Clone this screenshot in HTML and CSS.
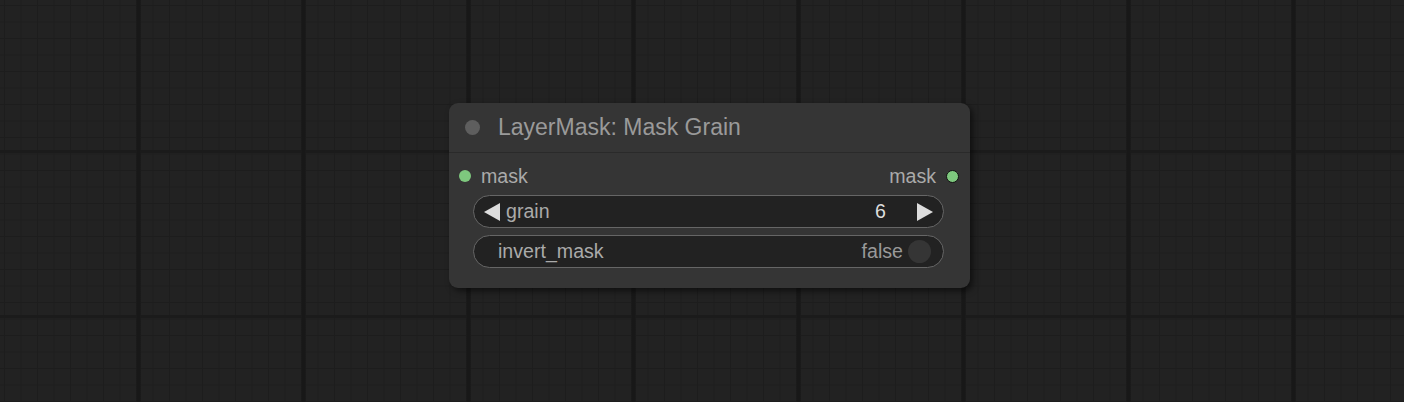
FILE: index.html
```html
<!DOCTYPE html>
<html>
<head>
<meta charset="utf-8">
<link rel="stylesheet" href="styles.css">
</head>
<body>
<div class="canvas">
  <div class="node">
    <div class="title">
      <span class="title-dot"></span>
      <span class="title-text">LayerMask: Mask Grain</span>
    </div>
    <div class="slots">
      <div class="slot">
        <span class="dot"></span>
        <span class="slot-label">mask</span>
      </div>
      <div class="slot out">
        <span class="slot-label">mask</span>
        <span class="dot dot-out"></span>
      </div>
    </div>
    <div class="widget number">
      <span class="arrow left"></span>
      <span class="w-label">grain</span>
      <span class="w-value">6</span>
      <span class="arrow right"></span>
    </div>
    <div class="widget toggle">
      <span class="w-label">invert_mask</span>
      <span class="w-state">false</span>
      <span class="knob"></span>
    </div>
  </div>
</div>
</body>
</html>
```

FILE: styles.css
```css
html, body {
  margin: 0;
  padding: 0;
}
body {
  width: 1404px;
  height: 402px;
  overflow: hidden;
  font-family: "Liberation Sans", Arial, sans-serif;
}
.canvas {
  position: relative;
  width: 1404px;
  height: 402px;
  background-color: #222222;
  background-image:
    linear-gradient(to right, #1d1d1d 0, #181818 1px, #181818 4px, #1d1d1d 5px, transparent 5px),
    linear-gradient(to bottom, #1b1b1b 0, #1b1b1b 3px, transparent 3px),
    linear-gradient(to right, #1d1d1d 0, #1d1d1d 1px, transparent 1px),
    linear-gradient(to bottom, #1d1d1d 0, #1d1d1d 1px, transparent 1px);
  background-size: 165px 165px, 165px 165px, 16.5px 16.5px, 16.5px 16.5px;
  background-position: 136px 0, 0 150px, 4px 0, 0 5px;
}
.node {
  position: absolute;
  left: 449px;
  top: 103px;
  width: 521px;
  height: 185px;
  box-sizing: border-box;
  background: #353535;
  border-radius: 9px;
  box-shadow: 3px 3px 6px rgba(0, 0, 0, 0.55);
  display: flex;
  flex-direction: column;
}
.title {
  height: 50px;
  box-sizing: border-box;
  border-bottom: 1px solid #2a2a2a;
  display: flex;
  align-items: center;
  padding-left: 16px;
  gap: 18px;
}
.title-dot {
  width: 15px;
  height: 15px;
  border-radius: 50%;
  background: #5e5e5e;
}
.title-text {
  color: #9a9a9a;
  font-size: 23px;
}
.slots {
  margin-top: 4px;
  height: 38px;
  display: flex;
  justify-content: space-between;
  align-items: center;
  padding: 0 11px 0 10px;
}
.slot {
  display: flex;
  align-items: center;
  gap: 10px;
}
.dot {
  width: 12px;
  height: 12px;
  border-radius: 50%;
  background: #7ec87e;
}
.dot-out {
  box-sizing: border-box;
  border: 1.5px solid #111;
  width: 13px;
  height: 13px;
}
.slot-label {
  color: #aaaaaa;
  font-size: 19.6px;
}
.widget {
  height: 33px;
  box-sizing: border-box;
  margin: 0 26px 0 24px;
  border: 1px solid #666;
  border-radius: 17px;
  background: #222222;
  display: flex;
  align-items: center;
  font-size: 19.6px;
}
.widget.number {
  padding: 0 10px 0 10px;
}
.widget.toggle {
  margin-top: 7px;
  padding: 0 12px 0 24px;
}
.arrow {
  width: 0;
  height: 0;
  border-top: 9px solid transparent;
  border-bottom: 9px solid transparent;
}
.arrow.left {
  border-right: 16px solid #dddddd;
}
.arrow.right {
  border-left: 16px solid #dddddd;
}
.w-label {
  color: #aaaaaa;
  margin-left: 6px;
  flex: 1;
}
.toggle .w-label {
  margin-left: 0;
}
.w-value {
  color: #dddddd;
  margin-right: 31px;
}
.w-state {
  color: #999999;
  margin-right: 5px;
}
.knob {
  width: 23px;
  height: 23px;
  border-radius: 50%;
  background: #353535;
}
```
